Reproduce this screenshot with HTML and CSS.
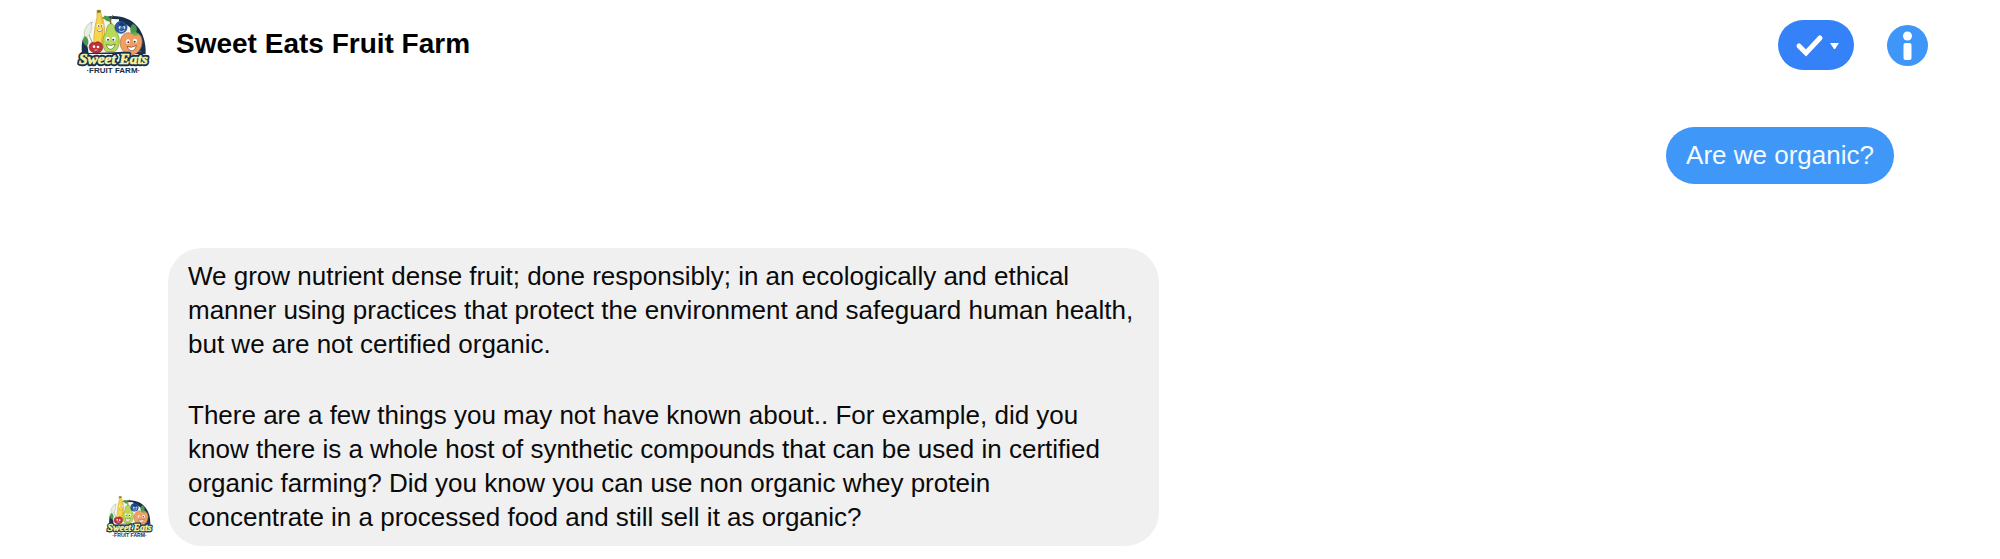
FILE: index.html
```html
<!DOCTYPE html>
<html lang="en">
<head>
<meta charset="utf-8">
<meta name="viewport" content="width=device-width, initial-scale=1">
<title>Sweet Eats Fruit Farm</title>
<link rel="stylesheet" href="styles.css">
</head>
<body>
<header class="header">
  <svg class="logo" viewBox="24 20 222 210" role="img" aria-label="Sweet Eats Fruit Farm logo">
    <g id="farm-logo">
      <path d="M39 158C36 86 73 44 133 44S232 88 230 158Z" fill="#17314c"/>
      <path d="M34 126C38 86 54 60 84 50L112 52L150 54C196 62 216 90 218 150L44 156Z" fill="#f6f7f0"/>
      <path d="M150 48C190 56 222 88 228 150L205 150C208 98 183 68 150 60Z" fill="#17314c"/>
      <path d="M42 112C56 128 58 144 58 156H39C37 140 38 124 42 112Z" fill="#17314c"/>
      <path d="M70 62C61 76 57 92 62 106L76 136M66 84L46 120" fill="none" stroke="#8fae80" stroke-width="3"/>
      <path d="M66 62C48 74 42 94 49 110C62 105 71 88 66 62Z" fill="#e8eee2" stroke="#b5c4a9" stroke-width="2"/>
      <path d="M47 104C38 116 42 130 54 134C62 124 58 108 47 104Z" fill="#4f9653"/>
      <path d="M84 27L95 27L96 39C106 58 110 92 104 122C101 136 88 142 77 132C73 116 75 104 77 87C78 66 86 54 84 40Z" fill="#f8d64b" stroke="#c79c2b" stroke-width="2"/>
      <path d="M84 27H95L94 34H85Z" fill="#7c7040"/>
      <path d="M96 44C102 70 102 99 96 128" fill="none" stroke="#e9b332" stroke-width="3"/>
      <ellipse cx="88" cy="73" rx="4" ry="5" fill="#fff"/><ellipse cx="99" cy="73" rx="4" ry="5" fill="#fff"/>
      <circle cx="89" cy="74" r="2" fill="#2a2a20"/><circle cx="98" cy="74" r="2" fill="#2a2a20"/>
      <path d="M84 86Q93 96 101 85" fill="#fff" stroke="#7a4a18" stroke-width="2"/>
      <path d="M125 67C136 67 138 79 141 91C155 105 154 139 137 151H111C97 136 99 106 111 94C113 80 115 68 125 67Z" fill="#b9d957" stroke="#679b36" stroke-width="2"/>
      <path d="M126 68C122 58 127 48 132 42" fill="none" stroke="#6c6532" stroke-width="4"/>
      <path d="M123 61C109 60 103 51 105 43C118 42 126 50 123 61Z" fill="#4b9d4a"/>
      <ellipse cx="116" cy="113" rx="6" ry="7" fill="#fff"/><ellipse cx="134" cy="113" rx="6" ry="7" fill="#fff"/>
      <circle cx="117" cy="115" r="3" fill="#254b2c"/><circle cx="133" cy="115" r="3" fill="#254b2c"/>
      <path d="M112 129Q125 137 139 128Q132 148 120 143Q114 139 112 129Z" fill="#fff" stroke="#4b6b24" stroke-width="2"/>
      <circle cx="156" cy="78" r="18" fill="#285ba7" stroke="#173d79" stroke-width="2"/>
      <path d="M146 63L152 67L158 60L162 67L170 66L165 73L153 74Z" fill="#173d79"/>
      <circle cx="153" cy="79" r="4" fill="#fff"/><circle cx="165" cy="79" r="4" fill="#fff"/>
      <circle cx="154" cy="80" r="2" fill="#132c54"/><circle cx="164" cy="80" r="2" fill="#132c54"/>
      <path d="M150 88Q158 95 167 87" fill="none" stroke="#fff" stroke-width="2"/>
      <path d="M187 96C211 88 224 108 218 132C213 153 196 164 181 157C159 155 149 132 156 112C161 97 174 91 187 96Z" fill="#ef9f63" stroke="#ba6436" stroke-width="2"/>
      <path d="M187 97C181 85 184 74 192 68C204 73 207 86 199 97Z" fill="#4c974c"/>
      <path d="M187 96C195 91 204 91 211 99C202 105 193 104 187 96Z" fill="#6eae4f"/>
      <ellipse cx="177" cy="121" rx="6" ry="7" fill="#fff"/><ellipse cx="198" cy="119" rx="6" ry="7" fill="#fff"/>
      <circle cx="178" cy="123" r="3" fill="#50291e"/><circle cx="197" cy="121" r="3" fill="#50291e"/>
      <path d="M174 136Q189 141 202 132Q198 151 185 148Q178 146 174 136Z" fill="#fff" stroke="#803a24" stroke-width="2"/>
      <path d="M78 125C86 117 99 124 101 136C102 148 92 156 80 155C67 154 59 145 61 134C63 124 71 121 78 125Z" fill="#c62d36" stroke="#7e1722" stroke-width="2"/>
      <circle cx="75" cy="136" r="4" fill="#fff"/><circle cx="87" cy="137" r="4" fill="#fff"/>
      <path d="M72 145Q80 153 90 145" fill="#fff" stroke="#5e101b" stroke-width="2"/>
      <text class="logo-script logo-script-edge" x="133" y="187" text-anchor="middle">Sweet Eats</text>
      <text class="logo-script" x="133" y="187" text-anchor="middle" aria-hidden="true">Sweet Eats</text>
      <text class="logo-caption" x="133" y="215" text-anchor="middle">·FRUIT FARM·</text>
    </g>
  </svg>
  <h1 class="title">Sweet Eats Fruit Farm</h1>
  <button class="done" type="button" aria-label="Mark as done">
    <svg class="done-icon" viewBox="0 0 76 50" aria-hidden="true">
      <path d="M21 26L28 33L42 18" fill="none" stroke="#fff" stroke-width="5" stroke-linecap="round"/>
      <path d="M52 23H61L57 29H56Z" fill="#fff"/>
    </svg>
  </button>
  <button class="info" type="button" aria-label="Information">
    <svg class="info-icon" viewBox="0 0 41 41" aria-hidden="true">
      <circle cx="20.5" cy="11" r="4.5" fill="#fff"/>
      <rect x="16.5" y="18" width="8" height="17" rx="2" fill="#fff"/>
    </svg>
  </button>
</header>
<main class="chat">
  <p class="bubble sent">Are we organic?</p>
  <article class="incoming">
    <svg class="avatar" viewBox="24 20 222 210" role="img" aria-label="Sweet Eats Fruit Farm"><use href="#farm-logo"/></svg>
    <div class="bubble received">
      <p>We grow nutrient dense fruit; done responsibly; in an ecologically and ethical<br>manner using practices that protect the environment and safeguard human health,<br>but we are not certified organic.</p>
      <p>There are a few things you may not have known about.. For example, did you<br>know there is a whole host of synthetic compounds that can be used in certified<br>organic farming? Did you know you can use non organic whey protein<br>concentrate in a processed food and still sell it as organic?</p>
    </div>
  </article>
</main>
</body>
</html>
```
FILE: styles.css
```css
* {
  box-sizing: border-box;
}

body {
  margin: 0;
  background: #fff;
  color: #0a0a0a;
  font-family: "Liberation Sans", Arial, sans-serif;
}

.header {
  display: flex;
  align-items: center;
  height: 90px;
  padding: 0 72px 0 77px;
}

.logo {
  width: 74px;
  height: 70px;
  margin: 0 25px 4px 0;
}

.logo-script {
  fill: #f6f2a2;
  stroke: #f6f2a2;
  stroke-width: 2px;
  font: italic bold 46px "Liberation Serif", serif;
}

.logo-script-edge {
  stroke: #17314c;
  stroke-width: 13px;
  stroke-linejoin: round;
}

.logo-caption {
  fill: #17314c;
  font: bold 24px "Liberation Sans", sans-serif;
}

.title {
  margin: 0 auto 2px 0;
  color: #000;
  font-size: 28px;
  line-height: 34px;
}

.done,
.info {
  flex: none;
  padding: 0;
  border: 0;
  cursor: pointer;
}

.done {
  width: 76px;
  height: 50px;
  margin-right: 33px;
  border-radius: 25px;
  background: #3581f7;
}

.info {
  width: 41px;
  height: 41px;
  border-radius: 50%;
  background: #3e97f8;
}

.done-icon,
.info-icon {
  display: block;
  width: 100%;
  height: 100%;
}

.chat {
  display: flex;
  flex-direction: column;
  gap: 64px;
  padding: 37px 106px 13px;
}

.bubble {
  margin: 0;
  font-size: 26px;
  line-height: 34px;
}

.sent {
  align-self: flex-end;
  padding: 11px 20px 12px;
  border-radius: 29px;
  background: #3f97f8;
  color: #f3fbff;
}

.incoming {
  display: flex;
  align-items: flex-end;
  gap: 14px;
}

.avatar {
  flex: none;
  width: 48px;
  height: 45px;
  margin-bottom: 6px;
}

.received {
  flex: 0 1 991px;
  padding: 11px 20px 12px;
  border-radius: 34px;
  background: #f0f0f0;
}

.received p {
  margin: 0;
}

.received p + p {
  margin-top: 37px;
}
```
